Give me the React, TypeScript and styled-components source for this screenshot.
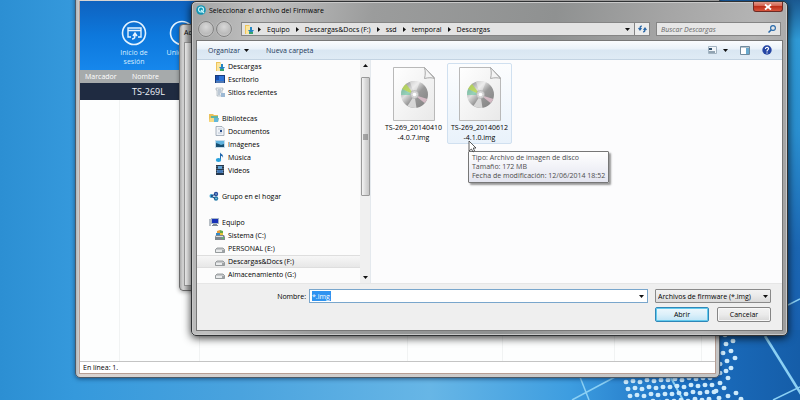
import React from "react";
import styled, { createGlobalStyle, css } from "styled-components";

const Global = createGlobalStyle`
  * { box-sizing: border-box; }
  html, body, #root { margin: 0; height: 100%; }
  body { font: 7px/9px "Open Sans", "Noto Sans", sans-serif; color: #000; overflow: hidden; }
  button, input, select { font: inherit; color: inherit; margin: 0; padding: 0; border: 0; background: none; }
  ul { list-style: none; margin: 0; padding: 0; }
  h1, h2, p { margin: 0; font: inherit; }
  svg { display: block; flex: none; }
`;

const Desktop = styled.main`
  position: relative;
  height: 100vh;
  overflow: hidden;
  background: linear-gradient(90deg, #2c8fd3 0, #3599dc 75px, #4aa3de 240px, #67b6e6 430px, #3d9de0 570px, #1c70c2 680px, #155da8 100%);
`;

const Wallpaper = styled.svg`
  position: absolute;
  right: 0;
  bottom: 0;
`;

const Window = styled.section`
  position: absolute;
  display: flex;
  flex-direction: column;
  border: 1px solid #4e5a66;
`;

const ManagerWindow = styled(Window)`
  left: 75px;
  right: 80px;
  top: -20px;
  bottom: 22px;
  padding: 20px 3px 3px;
  border-radius: 5px;
  background: linear-gradient(90deg, #aeb6bc, #d9d4d2 4px, #c5c5c5);
  box-shadow: 0 1px 4px rgba(0, 30, 70, 0.6);
`;

const ManagerBody = styled.div`
  flex: 1;
  display: flex;
  flex-direction: column;
  border: 1px solid #b79e94;
  border-top: 0;
  background: #fdfefe;
`;

const Banner = styled.div`
  display: flex;
  align-items: flex-start;
  height: 69px;
  padding: 19px 0 0 30px;
  background: linear-gradient(180deg, #0f62bf, #0d78dc 50%, #1687ec);
`;

const BannerButton = styled.button`
  display: flex;
  flex-direction: column;
  align-items: center;
  gap: 2px;
  width: 48px;
  padding: 0 8px;
  color: #d6edff;
`;

const DeviceTable = styled.table`
  width: 100%;
  border-collapse: collapse;
  table-layout: fixed;
  flex: none;
  text-align: left;
  th { height: 13px; padding: 0 5px; background: #a6aaab; color: #fff; font-weight: 400; }
  td { height: 17px; padding: 0 5px; background: #1f2b41; color: #eef2f8; font-size: 9px; }
  th:nth-child(2), td:nth-child(2) { padding-left: 12px; }
`;

const ColumnGuides = styled.div`
  flex: 1;
  display: grid;
  grid-template-columns: 40px 80px 208px 95px 112px 87px 1fr;
  & > span { border-right: 1px solid #f1f3f3; }
`;

const StatusBar = styled.footer`
  height: 12px;
  padding: 1px 3px;
  border-top: 1px solid #c4c4c4;
  background: #fff;
`;

const WizardWindow = styled(Window)`
  left: 179px;
  right: 120px;
  top: 24px;
  bottom: 109px;
  padding: 3px 4px 4px;
  border-radius: 4px;
  border-color: #6b6b6b;
  background: linear-gradient(90deg, #a9a9a9, #d8d8d8 3px, #b5b5b5 8px);
  box-shadow: 0 1px 4px rgba(0, 0, 0, 0.35);
`;

const WizardTitle = styled.h2`
  height: 14px;
`;

const WizardBody = styled.div`
  flex: 1;
  border: 1px solid #9b9b9b;
  background: #f4f4f4;
`;

const Dialog = styled(Window)`
  left: 191px;
  right: 12px;
  top: 1px;
  bottom: 64px;
  padding: 0 4px 4px;
  border: 1px solid #303234;
  border-radius: 5px;
  background: linear-gradient(100deg, #a2a3a3 0, #c0c0c0 70px, #9b9c9c 180px, #8f9191 360px, #a5a5a5 470px, #b4b4b4 560px, #9c9c9c 100%);
  box-shadow: inset 0 0 0 1px #c9c9c9, 0 2px 8px rgba(0, 0, 0, 0.8);
`;

const TitleBar = styled.header`
  display: flex;
  align-items: center;
  gap: 3px;
  height: 16px;
`;

const CloseButton = styled.button`
  display: flex;
  align-items: center;
  justify-content: center;
  align-self: flex-start;
  width: 30px;
  height: 10px;
  margin-left: auto;
  border: 1px solid #6d2a24;
  border-top: 0;
  border-radius: 0 0 3px 3px;
  background: linear-gradient(#e19a8b, #d4604c 45%, #bd2f1a 50%, #d8553c);
`;

const AddressRow = styled.div`
  display: flex;
  align-items: center;
  height: 22px;
  padding: 0 2px;
  gap: 6px;
`;

const NavButtons = styled.div`
  display: flex;
  align-items: center;
  gap: 2px;
  width: 37px;
`;

const RoundButton = styled.button`
  width: 16px;
  height: 16px;
  border: 1px solid #828282;
  border-radius: 50%;
  background: radial-gradient(circle at 50% 35%, #d8d8d8, #bbb 60%, #d4d4d4);
  box-shadow: 0 0 1px #e8e8e8;
`;

const PathBar = styled.div`
  flex: 1;
  display: flex;
  align-items: center;
  height: 14px;
  border: 1px solid #858585;
  background: #e3e3e3;
`;

const Crumbs = styled.nav`
  flex: 1;
  display: flex;
  align-items: center;
  gap: 6px;
  padding-left: 2px;
  & > svg:first-child { margin-right: -2px; }
`;

const RefreshButton = styled.button`
  display: flex;
  align-items: center;
  justify-content: center;
  width: 15px;
  height: 12px;
  margin-left: 4px;
  border-left: 1px solid #858585;
  background: #ececec;
`;

const SearchBox = styled.label`
  display: flex;
  align-items: center;
  width: 125px;
  height: 14px;
  padding: 0 4px;
  border: 1px solid #858585;
  background: #e6e6e6;
  input { flex: 1; min-width: 0; outline: 0; font-style: italic; }
  input::placeholder { color: #666; opacity: 1; }
`;

const DialogBody = styled.div`
  flex: 1;
  min-height: 0;
  display: flex;
  flex-direction: column;
  border: 1px solid #777;
  background: #fcfcfc;
`;

const Toolbar = styled.div`
  display: flex;
  align-items: center;
  flex: none;
  height: 19px;
  padding: 0 10px 0 11px;
  gap: 17px;
  border-bottom: 1px solid #c3d3e2;
  background: linear-gradient(#fafcfe, #eaf2f9 45%, #d9e6f2 50%, #dfebf5);
  color: #1e395b;
`;

const ToolButton = styled.button`
  display: flex;
  align-items: center;
  gap: 4px;
`;

const ViewButton = styled(ToolButton)`
  gap: 6px;
`;

const ToolIcons = styled.div`
  display: flex;
  align-items: center;
  gap: 12px;
  margin-left: auto;
`;

const Browser = styled.div`
  flex: 1;
  min-height: 0;
  display: flex;
`;

const Sidebar = styled.ul`
  width: 163px;
  overflow: hidden;
`;

const TreeRow = styled.li<{ $child?: boolean; $active?: boolean }>`
  display: flex;
  height: 13px;
  ${({ $active }) => $active && css`
    background: linear-gradient(#f8f8f8, #e6e6e6);
    box-shadow: inset 0 1px #dedede, inset 0 -1px #dedede;
  `}
  button {
    display: flex;
    align-items: center;
    gap: 3px;
    width: 100%;
    height: 12px;
    padding-left: ${({ $child }) => ($child ? 18 : 12)}px;
    text-align: left;
  }
`;

const ScrollTrack = styled.div`
  display: flex;
  flex-direction: column;
  align-items: center;
  justify-content: space-between;
  width: 10px;
  padding: 4px 0;
  background: #f0f0f0;
`;

const ScrollThumb = styled.div`
  display: flex;
  align-items: center;
  justify-content: center;
  width: 9px;
  height: 119px;
  margin: 10px 0 auto;
  border: 1px solid #999;
  border-radius: 1px;
  background: linear-gradient(90deg, #f4f4f4, #dadada 50%, #c6c6c6);
`;

const Files = styled.div`
  flex: 1;
  display: flex;
  align-items: flex-start;
  gap: 1px;
  padding: 3px 10px;
  border-left: 1px solid #e4e9ee;
  background: #fcfcfd;
`;

const FileTile = styled.button<{ $hover?: boolean }>`
  position: relative;
  display: flex;
  flex-direction: column;
  align-items: center;
  gap: 2px;
  width: 65px;
  height: 81px;
  padding: 3px 0 0;
  line-height: 10px;
  border: 1px solid ${({ $hover }) => ($hover ? "#d0e0f0" : "transparent")};
  border-radius: 2px;
  background: ${({ $hover }) => ($hover ? "linear-gradient(#fcfdfe, #e9f2fb)" : "none")};
`;

const Pointer = styled.svg`
  position: absolute;
  left: 20px;
  top: 76px;
  z-index: 2;
`;

const Tooltip = styled.div`
  position: absolute;
  left: 20px;
  top: 87px;
  z-index: 1;
  padding: 1px 3px 2px;
  border: 1px solid #777;
  border-radius: 1px;
  background: linear-gradient(#fff, #e4e5f0);
  box-shadow: 2px 2px 2px rgba(0, 0, 0, 0.4);
  color: #4c4c4c;
  line-height: 9px;
  text-align: left;
  white-space: nowrap;
`;

const Footer = styled.form`
  display: grid;
  grid-template-columns: 112px 1fr 116px;
  row-gap: 4px;
  align-content: start;
  align-items: center;
  flex: none;
  height: 47px;
  padding: 5px 11px 0 0;
  border-top: 1px solid #e6e6e6;
  background: #efefef;
`;

const NameLabel = styled.label`
  padding-right: 3px;
  text-align: right;
`;

const NameField = styled.div`
  display: flex;
  align-items: center;
  height: 14px;
  margin-right: 7px;
  padding: 0 3px 0 2px;
  border: 1px solid #79a6cc;
  background: #fff;
  input {
    flex: none;
    width: 19px;
    height: 10px;
    outline: 0;
    background: #3093f0;
    color: #fff;
  }
  button { margin-left: auto; }
`;

const TypeSelect = styled.div`
  position: relative;
  select {
    display: block;
    appearance: none;
    width: 100%;
    height: 14px;
    padding: 0 12px 0 2px;
    border: 1px solid #8a8a8a;
    border-radius: 1px;
    background: linear-gradient(#f2f2f2, #e9e9e9 50%, #dadada);
  }
  svg { position: absolute; right: 3px; top: 6px; pointer-events: none; }
`;

const Actions = styled.div`
  grid-column: 3;
  display: flex;
  justify-content: space-between;
`;

const ActionButton = styled.button<{ $primary?: boolean }>`
  width: 54px;
  height: 15px;
  border: 1px solid ${({ $primary }) => ($primary ? "#2f87b8" : "#858585")};
  border-radius: 2px;
  background: ${({ $primary }) =>
    $primary ? "linear-gradient(#eef7fc, #dcf0fa 50%, #bfe4f6)" : "linear-gradient(#f3f3f3, #ebebeb 50%, #d8d8d8)"};
  box-shadow: inset 0 0 0 1px ${({ $primary }) => ($primary ? "#63cbee" : "#f8f8f8")};
`;

const Down = ({ up = false }: { up?: boolean }) => (
  <svg width="5" height="3" viewBox="0 0 5 3"><path d={up ? "M0 3h5L2.500 0z" : "M0 0h5L2.500 3z"} fill="#111" /></svg>
);
const Right = () => (
  <svg width="3" height="5" viewBox="0 0 3 5"><path d="M0 0v5l3-2.500z" fill="#111" /></svg>
);

type IconName = "downloads" | "desktop" | "recent" | "libraries" | "document" | "image" | "music" | "video" | "homegroup" | "computer" | "system" | "drive";

const shapes: Record<IconName, React.ReactNode> = {
  downloads: (
    <>
      <path d="M1 1h4l1 1v8H1z" fill="#eec45b" />
      <path d="M2 2h4v8H2z" fill="#fbe6a0" />
      <path d="M6 3h2v3h2L7 10 4 6h2z" fill="#2485c2" />
      <path d="M5 8h4v2H5z" fill="#36a26d" />
    </>
  ),
  desktop: (
    <>
      <path d="M0 1h10v8H0z" fill="#173b7c" />
      <path d="M1 2h8v5H1z" fill="#2d74d8" />
      <path d="M1 2h3v4H1z" fill="#1b4cab" />
      <path d="M1 8h8" stroke="#8bb6e8" />
    </>
  ),
  recent: (
    <>
      <path d="M1 1h7v2H7v6H2V3H1z" fill="#e7ebef" stroke="#98a4b0" strokeWidth=".6" />
      <path d="M3 3h3M3 5h3M3 7h2" stroke="#708ba8" strokeWidth=".7" />
      <path d="M6 6h4v4H6z" fill="#9db9d4" />
    </>
  ),
  libraries: (
    <>
      <path d="M0 1h4l1 1h4v7H0z" fill="#eac15a" />
      <path d="M2 3h7v4H2z" fill="#5fb6a4" />
      <path d="M1 5h9L9 9H0z" fill="#f7dc86" />
      <path d="M5 5h5L9 9H5z" fill="#62b7d9" />
    </>
  ),
  document: (
    <>
      <path d="M1 .5h6l2 2v7H1z" fill="#eef2f7" stroke="#8895a5" strokeWidth=".7" />
      <path d="M3 3h4M3 7h4" stroke="#a6b4c5" strokeWidth=".7" />
      <path d="M5 4h2v2H5z" fill="#284d8b" />
    </>
  ),
  image: (
    <>
      <path d="M0 1h10v8H0z" fill="#c5dbea" />
      <path d="M1 2h8v6H1z" fill="#61b3df" />
      <path d="M1 4l3 1 2 1 3-1v3H1z" fill="#174e70" />
    </>
  ),
  music: (
    <>
      <path d="M5 0c0 2 4 2 3 6 0-2-2-2-2-2v4H5z" fill="#2468ad" />
      <ellipse cx="3.500" cy="8" rx="2.700" ry="2" fill="#28a1dc" />
    </>
  ),
  video: (
    <>
      <path d="M1 0h8v10H1z" fill="#26384b" />
      <path d="M3 1h4v3H3z" fill="#5ea0d4" />
      <path d="M2 5h6v3H2z" fill="#4176b5" />
      <path d="M2 1v8M8 1v8" stroke="#b9c6cf" strokeWidth=".6" strokeDasharray="1 1" />
    </>
  ),
  homegroup: (
    <>
      <circle cx="2.500" cy="5" r="2" fill="#3c9fcf" />
      <circle cx="7" cy="3" r="2.200" fill="#2a4e9d" />
      <circle cx="7" cy="7.500" r="2.200" fill="#257ba9" />
      <path d="M2 5l5-2M2 5l5 3" stroke="#183873" strokeWidth=".9" />
      <circle cx="7" cy="3" r=".8" fill="#9bc9f2" />
      <circle cx="7" cy="7.500" r=".8" fill="#8ed5e9" />
    </>
  ),
  computer: (
    <>
      <path d="M0 2h2v7H0z" fill="#b7bec5" />
      <path d="M2 1h8v6H2z" fill="#a6b5c8" />
      <path d="M3 2h6v4H3z" fill="#1832b8" />
      <path d="M4 7h4v1h1v1H3V8h1z" fill="#7d8998" />
    </>
  ),
  system: (
    <>
      <path d="M1 5h8l1 2v3H0V7z" fill="#7f878d" />
      <path d="M1 6h7v1H1z" fill="#d9dcdf" />
      <path d="M2 1l3-1v3H2z" fill="#e49b38" />
      <path d="M5 0l3 1v2H5z" fill="#64a746" />
      <path d="M1 3h4v2H1z" fill="#3489c6" />
      <path d="M5 3h3v2H5z" fill="#e6c439" />
      <path d="M7 8h2" stroke="#46d35c" />
    </>
  ),
  drive: (
    <>
      <path d="M2 5h6l1.500 1.500v3h-9v-3z" fill="#c7c9cb" stroke="#777c80" strokeWidth=".7" />
      <path d="M1 7h8v2H1z" fill="#e9ebec" />
      <path d="M7 8h2" stroke="#545c62" />
    </>
  ),
};

const Icon = ({ name }: { name: IconName }) => (
  <svg width="10" height="10" viewBox="0 0 10 10">{shapes[name]}</svg>
);

type Entry = { icon: IconName; label: string; child?: boolean; active?: boolean } | null;
const tree: Entry[] = [
  { icon: "downloads", label: "Descargas", child: true },
  { icon: "desktop", label: "Escritorio", child: true },
  { icon: "recent", label: "Sitios recientes", child: true },
  null,
  { icon: "libraries", label: "Bibliotecas" },
  { icon: "document", label: "Documentos", child: true },
  { icon: "image", label: "Imágenes", child: true },
  { icon: "music", label: "Música", child: true },
  { icon: "video", label: "Vídeos", child: true },
  null,
  { icon: "homegroup", label: "Grupo en el hogar" },
  null,
  { icon: "computer", label: "Equipo" },
  { icon: "system", label: "Sistema (C:)", child: true },
  { icon: "drive", label: "PERSONAL (E:)", child: true },
  { icon: "drive", label: "Descargas&Docs (F:)", child: true, active: true },
  { icon: "drive", label: "Almacenamiento (G:)", child: true },
];

const crumbs = ["Equipo", "Descargas&Docs (F:)", "ssd", "temporal", "Descargas"];

const DiscFile = () => (
  <svg width="42" height="54" viewBox="0 0 42 54">
    <defs>
      <linearGradient id="paper" x2="1" y2="1"><stop stopColor="#fff" /><stop offset="1" stopColor="#e9e9e9" /></linearGradient>
      <linearGradient id="disc" x2="1" y2="1"><stop stopColor="#777" /><stop offset=".35" stopColor="#dedede" /><stop offset=".55" stopColor="#999" /><stop offset="1" stopColor="#808080" /></linearGradient>
    </defs>
    <path d="M.5.500h31l10 10v43H.5z" fill="url(#paper)" stroke="#b9b9b9" />
    <path d="M31.500.500c1 4 1 7 0 11 4-1 7-1 10 0z" fill="#f4f4f4" stroke="#a8a8a8" />
    <circle cx="21.500" cy="27.500" r="13.500" fill="url(#disc)" />
    <path d="M21.500 28L9 22a14 14 0 0 1 4-5z" fill="#b4d84d" opacity=".8" />
    <path d="M21.500 28L8 28a14 14 0 0 1 1-6z" fill="#68c9a2" opacity=".6" />
    <path d="M21.500 28L17 15a14 14 0 0 1 10 0z" fill="#fff" opacity=".45" />
    <path d="M21.500 28l13 4a14 14 0 0 1-3 4z" fill="#e5c4d1" opacity=".8" />
    <path d="M21.500 28l-7 11a14 14 0 0 0 9 2z" fill="#f2f2f2" opacity=".7" />
    <circle cx="21.500" cy="27.500" r="4" fill="#d5d5d5" stroke="#aaa" strokeWidth=".6" />
    <circle cx="21.500" cy="27.500" r="1.800" fill="#fff" />
  </svg>
);

const continentEdge = [
  [293, 341], [286, 344], [291, 351], [283, 353], [295, 358], [287, 361], [280, 364], [291, 368],
  [286, 371], [280, 373], [288, 378], [280, 383], [284, 388], [296, 393], [288, 396], [301, 399],
  [276, 391], [279, 398], [285, 335], [290, 332],
];
const continentRows = Array.from({ length: 4 }, (_, row) =>
  Array.from({ length: 14 }, (_, col) => [186 + col * 7 + row * 2, 382 + row * 7 - (col % 2) - Math.floor(col / 3)]),
).flat().filter(([x]) => x < 275);
const dots = [...continentEdge, ...continentRows];

export default function App() {
  return (
    <>
      <Global />
      <Desktop>
        <Wallpaper width="360" height="400" viewBox="0 0 360 400" aria-hidden="true">
          <defs>
            <linearGradient id="sky" x2="0" y2="1">
              <stop stopColor="#1b5a92" />
              <stop offset=".12" stopColor="#2f9ad6" />
              <stop offset=".4" stopColor="#2a8fd0" />
              <stop offset=".75" stopColor="#1b66b2" />
              <stop offset="1" stopColor="#1860b0" />
            </linearGradient>
          </defs>
          <path d="M340 0h20v330h-20z" fill="url(#sky)" />
          <g stroke="#8bd0f4" fill="none">
            <path d="M325 336l36 58" strokeWidth="2.500" />
            <path d="M348 305l12-6M333 400l27-13M132 400l43-23M140 377l9 23" strokeWidth="1.500" />
            <path d="M230 376l13 24" strokeWidth="2" />
          </g>
          <g fill="#cdeafb">
            {dots.map(([x, y]) => <ellipse key={`${x}-${y}`} cx={x} cy={y} rx="2.500" ry="2.200" />)}
          </g>
        </Wallpaper>

        <ManagerWindow>
          <ManagerBody>
            <Banner>
              <BannerButton>
                <svg width="26" height="26" viewBox="0 0 26 26" fill="none" stroke="#e4f3ff">
                  <circle cx="13" cy="13" r="11.500" strokeWidth="1.600" />
                  <path d="M10 17H7V8h13v9h-3M7 10.500h13" strokeWidth="1.400" />
                  <path d="M11 19c3 0 3-2 3-5m-2 2l2-3 2 3" strokeWidth="1.500" />
                </svg>
                Inicio de sesión
              </BannerButton>
              <BannerButton>
                <svg width="26" height="26" viewBox="0 0 26 26" fill="none" stroke="#e4f3ff">
                  <circle cx="13" cy="13" r="11.500" strokeWidth="1.600" />
                </svg>
                Unidades
              </BannerButton>
            </Banner>
            <DeviceTable>
              <colgroup><col width="40" /><col /></colgroup>
              <thead><tr><th scope="col">Marcador</th><th scope="col">Nombre</th></tr></thead>
              <tbody><tr><td /><td>TS-269L</td></tr></tbody>
            </DeviceTable>
            <ColumnGuides><span /><span /><span /><span /><span /><span /></ColumnGuides>
            <StatusBar>En línea: 1.</StatusBar>
          </ManagerBody>
        </ManagerWindow>

        <WizardWindow>
          <WizardTitle>Actualizar</WizardTitle>
          <WizardBody />
        </WizardWindow>

        <Dialog role="dialog" aria-labelledby="dialog-title">
          <TitleBar>
            <svg width="10" height="10" viewBox="0 0 10 10">
              <circle cx="5" cy="5" r="4.800" fill="#1395b4" />
              <circle cx="5" cy="4.500" r="2.500" fill="none" stroke="#c8f3fa" strokeWidth="1.200" />
              <path d="M5 5l3 3" stroke="#c8f3fa" strokeWidth="1.200" />
            </svg>
            <h1 id="dialog-title">Seleccionar el archivo del Firmware</h1>
            <CloseButton aria-label="Cerrar">
              <svg width="8" height="6" viewBox="0 0 8 6"><path d="M1 .5l6 5M7 .5l-6 5" stroke="#fff" strokeWidth="1.800" /></svg>
            </CloseButton>
          </TitleBar>
          <AddressRow>
            <NavButtons>
              <RoundButton aria-label="Atrás" />
              <RoundButton aria-label="Adelante" />
            </NavButtons>
            <PathBar>
              <Crumbs aria-label="Ruta">
                <Icon name="downloads" />
                {crumbs.map((crumb) => (
                  <React.Fragment key={crumb}>
                    <Right />
                    <button>{crumb}</button>
                  </React.Fragment>
                ))}
              </Crumbs>
              <button aria-label="Historial"><Down /></button>
              <RefreshButton aria-label="Actualizar">
                <svg width="9" height="8" viewBox="0 0 9 8" fill="none" stroke="#2866a6" strokeWidth="1.200">
                  <path d="M4 1C2 1 2 2 2 4M.5 3L2 5l1.500-2" /><path d="M5 7c2 0 2-1 2-3M5.500 5L7 3l1.500 2" />
                </svg>
              </RefreshButton>
            </PathBar>
            <SearchBox>
              <input aria-label="Buscar" placeholder="Buscar Descargas" />
              <svg width="8" height="8" viewBox="0 0 8 8" fill="none" stroke="#2567a8">
                <circle cx="5" cy="3" r="2.400" strokeWidth="1.100" /><path d="M3.300 4.700L.5 7.500" strokeWidth="1.500" />
              </svg>
            </SearchBox>
          </AddressRow>

          <DialogBody>
            <Toolbar>
              <ToolButton>Organizar <Down /></ToolButton>
              <ToolButton>Nueva carpeta</ToolButton>
              <ToolIcons>
                <ViewButton aria-label="Vista">
                  <svg width="9" height="8" viewBox="0 0 9 8"><path d="M.5.500h8v7h-8z" fill="#f2f6fa" stroke="#a3b4c2" /><path d="M1 2h3v2H1z" fill="#31506b" /><path d="M1 6h6" stroke="#31506b" /></svg>
                  <Down />
                </ViewButton>
                <ToolButton aria-label="Panel de vista previa">
                  <svg width="10" height="9" viewBox="0 0 10 9"><path d="M.5.500h9v8h-9z" fill="#fff" stroke="#718b9e" /><path d="M1 1h8" stroke="#718b9e" /><path d="M6 2h3v6H6z" fill="#68a9ce" /></svg>
                </ToolButton>
                <ToolButton aria-label="Ayuda">
                  <svg width="10" height="10" viewBox="0 0 10 10"><circle cx="5" cy="5" r="4.700" fill="#2445a3" /><path d="M3.500 4c0-2.500 3.500-2 3 0C6.300 5 5 4.800 5 6.500M5 7.500v1" fill="none" stroke="#fff" strokeWidth="1.200" /></svg>
                </ToolButton>
              </ToolIcons>
            </Toolbar>
            <Browser>
              <Sidebar>
                {tree.map((entry, i) => (
                  <TreeRow key={i} $child={entry?.child} $active={entry?.active}>
                    {entry && <button><Icon name={entry.icon} />{entry.label}</button>}
                  </TreeRow>
                ))}
              </Sidebar>
              <ScrollTrack>
                <Down up />
                <ScrollThumb>
                  <svg width="5" height="6" viewBox="0 0 5 6"><path d="M0 1h5M0 3h5M0 5h5" stroke="#666" /></svg>
                </ScrollThumb>
                <Down />
              </ScrollTrack>
              <Files>
                <FileTile><DiscFile /><span>TS-269_20140410<br />-4.0.7.img</span></FileTile>
                <FileTile $hover>
                  <DiscFile />
                  <span>TS-269_20140612<br />-4.1.0.img</span>
                  <Pointer width="9" height="13" viewBox="0 0 9 13"><path d="M1 1v10l2.500-2 1.500 3 1.500-1L5.300 8H8z" fill="#fff" stroke="#333" strokeWidth=".8" /></Pointer>
                  <Tooltip role="tooltip">
                    <p>Tipo: Archivo de imagen de disco</p>
                    <p>Tamaño: 172 MB</p>
                    <p>Fecha de modificación: 12/06/2014 18:52</p>
                  </Tooltip>
                </FileTile>
              </Files>
            </Browser>
            <Footer onSubmit={(e) => e.preventDefault()}>
              <NameLabel htmlFor="file-name">Nombre:</NameLabel>
              <NameField>
                <input id="file-name" defaultValue="*.img" />
                <button type="button" aria-label="Mostrar nombres"><Down /></button>
              </NameField>
              <TypeSelect>
                <select aria-label="Tipo de archivo"><option>Archivos de firmware (*.img)</option></select>
                <Down />
              </TypeSelect>
              <Actions>
                <ActionButton $primary>Abrir</ActionButton>
                <ActionButton type="button">Cancelar</ActionButton>
              </Actions>
            </Footer>
          </DialogBody>
        </Dialog>
      </Desktop>
    </>
  );
}
